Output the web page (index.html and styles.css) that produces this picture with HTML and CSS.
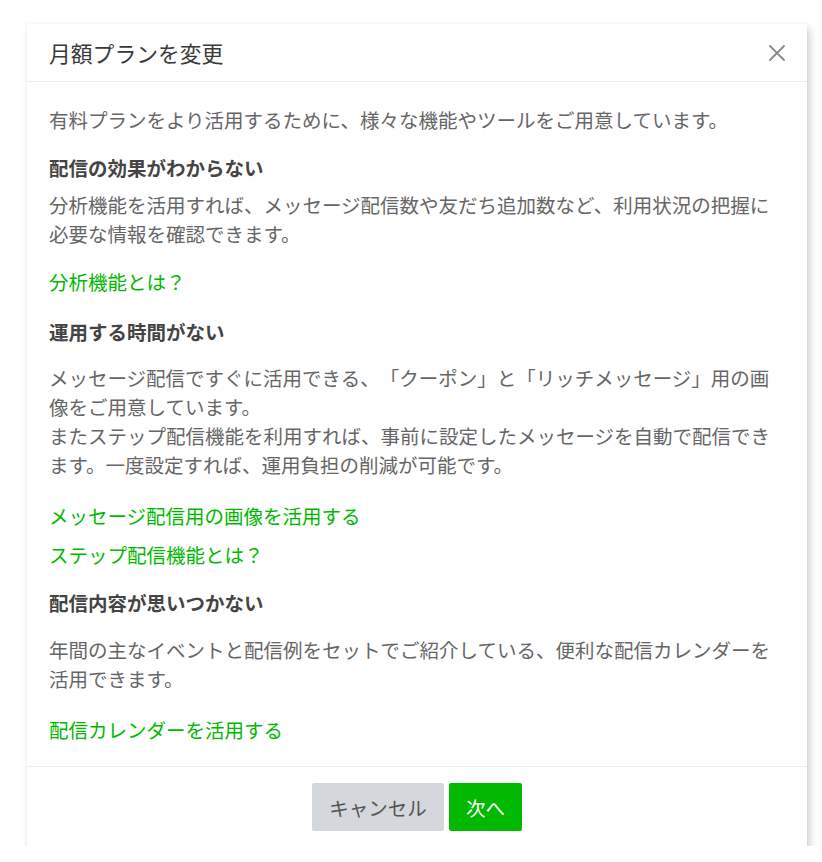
FILE: index.html
```html
<!DOCTYPE html>
<html lang="ja">
<head>
<meta charset="utf-8">
<title>月額プランを変更</title>
<link rel="stylesheet" href="styles.css">
</head>
<body>
<div class="stage">
  <div class="modal">
    <div class="modal-header">
      <h1 class="modal-title">月額プランを変更</h1>
      <button class="close" aria-label="閉じる">
        <svg width="18" height="18" viewBox="0 0 18 18"><path d="M2 2 L16 16 M16 2 L2 16" stroke="#8a8a8a" stroke-width="1.8" fill="none" stroke-linecap="round"/></svg>
      </button>
    </div>
    <div class="modal-body">
      <p class="text">有料プランをより活用するために、様々な機能やツールをご用意しています。</p>
      <h2 class="heading gap">配信の効果がわからない</h2>
      <p class="text tight">分析機能を活用すれば、メッセージ配信数や友だち追加数など、利用状況の把握に必要な情報を確認できます。</p>
      <a class="link gap" href="#">分析機能とは？</a>
      <h2 class="heading gap-m">運用する時間がない</h2>
      <p class="text gap-s">メッセージ配信ですぐに活用できる、「クーポン」と「リッチメッセージ」用の画像をご用意しています。<br>またステップ配信機能を利用すれば、事前に設定したメッセージを自動で配信できます。一度設定すれば、運用負担の削減が可能です。</p>
      <a class="link gap-l" href="#">メッセージ配信用の画像を活用する</a>
      <a class="link tight-l" href="#">ステップ配信機能とは？</a>
      <h2 class="heading gap">配信内容が思いつかない</h2>
      <p class="text gap-s2">年間の主なイベントと配信例をセットでご紹介している、便利な配信カレンダーを活用できます。</p>
      <a class="link gap-l" href="#">配信カレンダーを活用する</a>
    </div>
    <div class="modal-footer">
      <button class="btn btn-cancel">キャンセル</button>
      <button class="btn btn-next">次へ</button>
    </div>
  </div>
</div>
</body>
</html>
```
FILE: styles.css
```css
html, body {
  margin: 0;
  padding: 0;
  background: #ffffff;
}
body {
  font-family: "Noto Sans CJK JP", "Noto Sans", sans-serif;
  color: #666666;
  text-spacing-trim: space-all;
}
.stage {
  padding: 24px 0 0 27px;
}
.modal {
  width: 780px;
  background: #ffffff;
  box-shadow: 3px 5px 8px rgba(0, 0, 0, 0.18), 0 0 2px rgba(0, 0, 0, 0.06);
}
.modal-header {
  height: 57px;
  border-bottom: 1px solid #ececec;
  display: flex;
  align-items: center;
  justify-content: space-between;
  padding: 0 22px;
}
.modal-title {
  margin: 0;
  font-size: 21.8px;
  font-weight: 400;
  color: #3a3a3a;
  line-height: 1;
  padding-top: 1px;
}
.close {
  border: 0;
  background: none;
  padding: 0;
  margin-right: -1px;
  width: 18px;
  height: 18px;
  display: flex;
  cursor: pointer;
}
.modal-body {
  padding: 23px 22px 22px;
  display: flex;
  flex-direction: column;
  align-items: flex-start;
}
.text, .heading, .link {
  margin: 0;
  font-size: 19.5px;
  line-height: 29px;
}
.text {
  color: #666666;
}
.heading {
  font-weight: 700;
  color: #444444;
}
.link {
  color: #00b900;
  text-decoration: none;
}
.gap {
  margin-top: 19px;
}
.gap-m {
  margin-top: 21px;
}
.gap-s {
  margin-top: 17px;
}
.gap-s2 {
  margin-top: 18px;
}
.gap-l {
  margin-top: 22px;
}
.tight {
  margin-top: 8px;
}
.tight-l {
  margin-top: 10px;
}
.modal-footer {
  border-top: 1px solid #ececec;
  padding: 16px 0 15px;
  display: flex;
  justify-content: center;
  gap: 5px;
}
.btn {
  height: 48px;
  border: 0;
  border-radius: 2px;
  font-family: "Noto Sans CJK JP", "Noto Sans", sans-serif;
  font-size: 19.5px;
  padding: 0 17px;
  cursor: pointer;
}
.btn-cancel {
  width: 132px;
  background: #d4d7db;
  color: #555555;
}
.btn-next {
  width: 73px;
  background: #00b900;
  color: #ffffff;
}
```
